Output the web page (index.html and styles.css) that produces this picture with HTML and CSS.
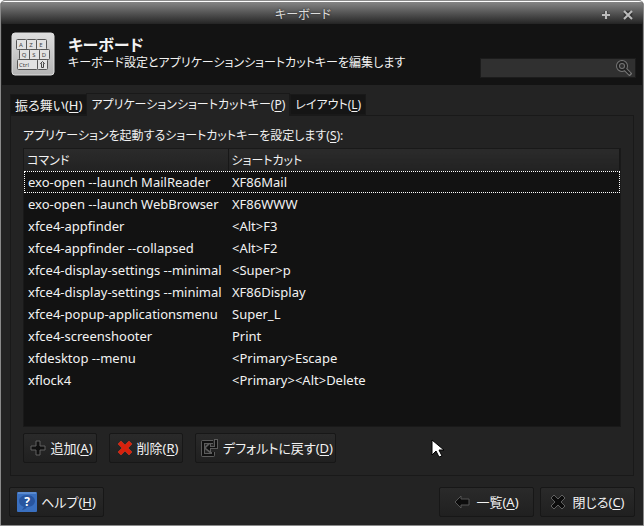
FILE: index.html
```
<!DOCTYPE html>
<html lang="ja">
<head>
  <meta charset="UTF-8" />
  <meta name="viewport" content="width=device-width, initial-scale=1.0" />
  <title>キーボード</title>
  <link rel="stylesheet" href="styles.css">
</head>
<body>
  <div class="window">
    <div class="titlebar">
      <span class="title">キーボード</span>
      <div class="controls">
        <button type="button" aria-label="最大化">
          <svg width="10" height="10" viewBox="0 0 10 10"><path d="M5 1v8M1 5h8" stroke="#444" stroke-width="4"/><path d="M5 1v8M1 5h8" stroke="#bbb" stroke-width="2"/></svg>
        </button>
        <button type="button" aria-label="閉じる">
          <svg width="10" height="10" viewBox="0 0 10 10"><path d="M2 2l6 6M8 2l-6 6" stroke="#333" stroke-width="5"/><path d="M1 1l8 8M9 1l-8 8" stroke="#bbb" stroke-width="2"/></svg>
        </button>
      </div>
    </div>

    <header class="header">
      <svg class="app-icon" width="44" height="44" viewBox="0 0 44 44">
        <defs>
          <linearGradient id="plate" x1="0" y1="0" x2="0" y2="1">
            <stop offset="0" stop-color="#dedede"/>
            <stop offset="1" stop-color="#b4b4b4"/>
          </linearGradient>
        </defs>
        <rect x="1" y="1" width="42" height="42" rx="3" fill="url(#plate)" stroke="#ddd"/>
        <g fill="#e2e2e2" stroke="#555" stroke-width="1">
          <rect x="5.500" y="7.500" width="10" height="10" rx="1"/>
          <rect x="15.500" y="7.500" width="10" height="10" rx="1"/>
          <rect x="25.500" y="7.500" width="10" height="10" rx="1"/>
          <rect x="8.500" y="17.500" width="10" height="10" rx="1"/>
          <rect x="18.500" y="17.500" width="10" height="10" rx="1"/>
          <rect x="28.500" y="17.500" width="10" height="10" rx="1"/>
          <rect x="6.500" y="27.500" width="20" height="10" rx="1"/>
          <rect x="26.500" y="27.500" width="10" height="10" rx="1"/>
        </g>
        <g class="keycaps" text-anchor="middle">
          <text x="10" y="15">A</text><text x="20" y="15">Z</text><text x="30" y="15">E</text>
          <text x="13" y="25">Q</text><text x="23" y="25">S</text><text x="33" y="25">D</text>
          <text x="13" y="35">Ctrl</text>
        </g>
        <path d="M31.500 29.500l2 2h-1v4h-2v-4h-1z" fill="none" stroke="#444"/>
      </svg>
      <div class="heading">
        <h1>キーボード</h1>
        <p>キーボード設定とアプリケーションショートカットキーを編集します</p>
      </div>
      <div class="search">
        <input type="text" aria-label="検索">
        <svg width="16" height="16" viewBox="0 0 16 16" fill="none">
          <path d="M9 9l6 6" stroke="#777" stroke-width="4"/>
          <circle cx="6" cy="6" r="4" stroke="#777" stroke-width="4"/>
          <circle cx="6" cy="6" r="4" stroke="#222" stroke-width="2"/>
          <path d="M9 9l5 5" stroke="#222" stroke-width="2"/>
        </svg>
      </div>
    </header>

    <main>
      <div class="tabs" role="tablist">
        <button type="button" role="tab">振る舞い(<u>H</u>)</button>
        <button type="button" role="tab" class="active" aria-selected="true">アプリケーションショートカットキー(<u>P</u>)</button>
        <button type="button" role="tab">レイアウト(<u>L</u>)</button>
      </div>
      <section class="pane">
        <p class="caption" id="caption">アプリケーションを起動するショートカットキーを設定します(<u>S</u>):</p>
        <div class="list">
          <table aria-labelledby="caption">
            <thead>
              <tr><th class="command">コマンド</th><th>ショートカット</th></tr>
            </thead>
            <tbody>
              <tr class="focused"><td>exo-open --launch MailReader</td><td>XF86Mail</td></tr>
              <tr><td>exo-open --launch WebBrowser</td><td>XF86WWW</td></tr>
              <tr><td>xfce4-appfinder</td><td>&lt;Alt&gt;F3</td></tr>
              <tr><td>xfce4-appfinder --collapsed</td><td>&lt;Alt&gt;F2</td></tr>
              <tr><td>xfce4-display-settings --minimal</td><td>&lt;Super&gt;p</td></tr>
              <tr><td>xfce4-display-settings --minimal</td><td>XF86Display</td></tr>
              <tr><td>xfce4-popup-applicationsmenu</td><td>Super_L</td></tr>
              <tr><td>xfce4-screenshooter</td><td>Print</td></tr>
              <tr><td>xfdesktop --menu</td><td>&lt;Primary&gt;Escape</td></tr>
              <tr><td>xflock4</td><td>&lt;Primary&gt;&lt;Alt&gt;Delete</td></tr>
            </tbody>
          </table>
        </div>
        <div class="actions">
          <button type="button" class="btn">
            <svg width="16" height="16" viewBox="0 0 16 16"><path d="M6 1h4v5h5v4h-5v5H6v-5H1V6h5z" fill="#111" stroke="#606060"/></svg>
            <span>追加(<u>A</u>)</span>
          </button>
          <button type="button" class="btn">
            <svg width="16" height="16" viewBox="0 0 16 16"><path d="M4 1l4 4 4-4 3 3-4 4 4 4-3 3-4-4-4 4-3-3 4-4-4-4z" fill="#d8210c" stroke="#b03020"/></svg>
            <span>削除(<u>R</u>)</span>
          </button>
          <button type="button" class="btn">
            <svg width="18" height="18" viewBox="0 0 18 18" fill="none">
              <path d="M12 3H2v13h10v-3" stroke="#5c5c5c" stroke-width="4" stroke-linejoin="round"/>
              <path d="M16 0v9H9v4L4 9l5-5v4h5V0z" fill="#101010" stroke="#5c5c5c" stroke-width="2"/>
              <path d="M12 3H2v13h10v-3" stroke="#101010" stroke-width="2"/>
              <path d="M16 1v8H9v3L5 9l4-4v3h5V1z" fill="#101010"/>
            </svg>
            <span>デフォルトに戻す(<u>D</u>)</span>
          </button>
        </div>
      </section>
    </main>

    <footer class="footer">
      <button type="button" class="btn help">
        <svg width="20" height="20" viewBox="0 0 20 20">
          <rect width="20" height="20" rx="1" fill="#3a70c0"/>
          <path d="M1 1h18" stroke="#7ba4dd"/>
          <path d="M10 3c-5 0-8 3-8 6s2 5 5 6l-2 3c3 0 4-2 5-3 5 0 8-3 8-6s-3-6-8-6z" fill="#28559f"/>
          <text class="question" x="10" y="14" text-anchor="middle">?</text>
        </svg>
        <span>ヘルプ(<u>H</u>)</span>
      </button>
      <div class="footer-right">
        <button type="button" class="btn">
          <svg width="16" height="16" viewBox="0 0 16 16"><path d="M1 8l6-6v3h8v6H7v3z" fill="#0c0c0c" stroke="#555"/></svg>
          <span>一覧(<u>A</u>)</span>
        </button>
        <button type="button" class="btn">
          <svg width="16" height="16" viewBox="0 0 16 16"><path d="M4 1l4 4 4-4 3 3-4 4 4 4-3 3-4-4-4 4-3-3 4-4-4-4z" fill="#0c0c0c" stroke="#606060"/></svg>
          <span>閉じる(<u>C</u>)</span>
        </button>
      </div>
    </footer>

    <svg class="cursor" width="14" height="20" viewBox="0 0 14 20"><path d="M1 1v15l4-4 3 6 3-1-3-6h5z" fill="#fff" stroke="#000"/></svg>
  </div>
</body>
</html>
```
FILE: styles.css
```
* {
  box-sizing: border-box;
}
body {
  margin: 0;
  background: #fff;
  color: #f2f2f2;
  font-family: "Noto Sans", "Noto Sans CJK JP", sans-serif;
  font-size: 13px;
  line-height: 18px;
  font-feature-settings: "palt";
}
h1, p {
  margin: 0;
}
button, input {
  font: inherit;
  font-feature-settings: inherit;
  color: inherit;
}
svg {
  flex: none;
}
u {
  text-underline-offset: 2px;
}
.window {
  position: relative;
  display: flex;
  flex-direction: column;
  min-height: 100vh;
  background: #232323;
  border: 1px solid #8a8a8a;
  border-radius: 5px 5px 0 0;
  overflow: hidden;
}
.titlebar {
  display: flex;
  align-items: center;
  height: 23px;
  padding: 3px 10px 0 4px;
  background: linear-gradient(#858585, #242424);
  border-top: 1px solid #fff;
}
.title {
  flex: 1;
  text-align: center;
  font-size: 12px;
  color: #ddd;
  text-shadow: 0 0 2px #222;
}
.controls {
  display: flex;
  gap: 12px;
}
.controls button {
  display: flex;
  padding: 0;
  border: none;
  background: none;
}
.header {
  display: flex;
  gap: 13px;
  height: 61px;
  padding: 8px 6px 0 9px;
  margin: 0 1px;
  background: #131313;
}
.heading {
  flex: 1;
  padding-top: 3px;
}
.heading h1 {
  font-size: 16px;
  line-height: 20px;
}
.heading p {
  font-size: 12px;
  line-height: 16px;
  white-space: nowrap;
}
.search {
  display: flex;
  align-items: center;
  align-self: flex-end;
  width: 156px;
  height: 20px;
  margin: 0 0 7px -156px;
  padding-right: 3px;
  background: #303030;
  border: 1px solid #1c1c1c;
}
.search input {
  flex: 1;
  min-width: 0;
  border: none;
  outline: none;
  background: none;
}
main {
  flex: 1;
  display: flex;
  flex-direction: column;
  padding: 8px 9px 0;
}
.tabs {
  display: flex;
  align-items: flex-end;
}
.tabs button {
  height: 21px;
  padding: 0 4px;
  border: 1px solid #191919;
  background: #151515;
  white-space: nowrap;
  line-height: 18px;
}
.tabs button:first-child {
  border-right: none;
}
.tabs button:not(:first-child) {
  font-size: 12px;
}
.tabs .active {
  position: relative;
  height: 23px;
  margin-bottom: -1px;
  background: #232323;
  border-bottom: none;
}
.pane {
  flex: 1;
  display: flex;
  flex-direction: column;
  padding: 11px 12px 12px;
  border: 1px solid #191919;
}
.caption {
  height: 21px;
  font-size: 12px;
}
.list {
  flex: 1;
  background: #121212;
  border: 1px solid #191919;
}
table {
  width: 100%;
  table-layout: fixed;
  border-collapse: collapse;
}
th {
  height: 22px;
  padding: 2px 3px 0;
  background: linear-gradient(#2b2b2b, #222);
  border-right: 1px solid #171717;
  font-size: 12px;
  font-weight: normal;
  text-align: left;
}
.command {
  width: 204px;
}
td {
  height: 22px;
  padding: 0 4px;
  white-space: nowrap;
}
.focused {
  outline: 1px dotted #fff;
  outline-offset: -1px;
}
.actions {
  display: flex;
  gap: 12px;
  padding-top: 6px;
}
.btn {
  display: flex;
  align-items: center;
  justify-content: center;
  gap: 4px;
  height: 30px;
  min-width: 74px;
  padding: 0 2px 0 5px;
  background: linear-gradient(#2a2a2a, #202020);
  border: 1px solid #171717;
  border-radius: 2px;
  white-space: nowrap;
}
.footer {
  display: flex;
  justify-content: space-between;
  padding: 11px 8px 8px;
}
.footer .btn {
  min-width: 95px;
  padding: 0 3px;
}
.footer-right {
  display: flex;
  gap: 6px;
}
.footer-right .btn {
  gap: 6px;
}
.keycaps {
  font-size: 6px;
  fill: #444;
}
.question {
  font-size: 12px;
  font-weight: bold;
  fill: #fff;
}
.cursor {
  position: absolute;
  left: 430px;
  top: 438px;
}
```
